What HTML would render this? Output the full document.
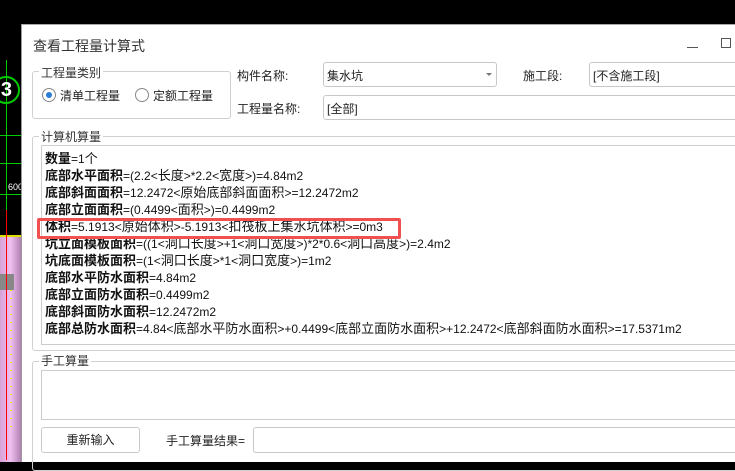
<!DOCTYPE html>
<html><head><meta charset="utf-8"><style>
*{margin:0;padding:0;box-sizing:border-box}
body{width:735px;height:462px;overflow:hidden;background:#000;position:relative;font-family:"Liberation Sans","Microsoft YaHei","Noto Sans CJK SC",sans-serif;font-size:12px;color:#222}
.a{position:absolute}
.dlg{left:21px;top:24px;width:714px;height:438px;background:#fff;border-left:1px solid #999;border-top:1px solid #aaa}
.gb{border:1px solid #d0d0d0;border-radius:3px}
.lg{background:#fff;padding:0 2px;color:#333}
.box{border:1px solid #c8c8c8;border-radius:3px;background:#fff}
.ta{border:1px solid #ccc;background:#fff}
.ln{position:absolute;left:45px;font-size:13px;line-height:17px;white-space:nowrap;color:#111}
.ln b{font-weight:bold}
.ln i{font-style:normal;font-size:12px}
</style></head><body>
<div class="a" style="left:0;top:236px;width:21px;height:226px;background:linear-gradient(90deg,#d8a0d8,#f0c0f0 50%,#b080b0)"></div>
<div class="a" style="left:0;top:235px;width:21px;height:2px;background:#dd0"></div>
<div class="a" style="left:0;top:274px;width:14px;height:16px;background:#888"></div>
<div class="a" style="left:6px;top:60px;width:1px;height:400px;background:#f00"></div>
<div class="a" style="left:6px;top:60px;width:1px;height:150px;background:#0c0"></div>
<div class="a" style="left:0;top:135px;width:21px;height:1px;background:#0c0"></div>
<div class="a" style="left:0;top:163px;width:21px;height:1px;background:#0c0"></div>
<div class="a" style="left:0;top:194px;width:21px;height:1px;background:#0c0"></div>
<div class="a" style="left:-8px;top:76px;width:28px;height:28px;border:2px solid #0c0;border-radius:50%;color:#fff;font-weight:bold;font-size:20px;line-height:24px;text-align:right;padding-right:6px">3</div>
<div class="a" style="left:8px;top:182px;color:#fff;font-size:9px">600</div>
<div class="a" style="left:10px;top:290px;width:2px;height:140px;background:repeating-linear-gradient(#ee0 0 1px,transparent 1px 8px)"></div>

<div class="a dlg"></div>
<div class="a" style="left:33px;top:36px;font-size:14px;color:#333">查看工程量计算式</div>
<div class="a" style="left:687px;top:47px;width:11px;height:1px;background:#555"></div>
<div class="a" style="left:721px;top:38px;width:10px;height:10px;border:1px solid #555"></div>

<div class="a gb" style="left:32px;top:71px;width:199px;height:48px"></div>
<div class="a lg" style="left:39px;top:64px">工程量类别</div>
<div class="a" style="left:42px;top:88px;width:14px;height:14px;border:1px solid #888;border-radius:50%;background:#fff"></div>
<div class="a" style="left:46px;top:92px;width:6px;height:6px;border-radius:50%;background:#2b7cd3"></div>
<div class="a" style="left:60px;top:87px">清单工程量</div>
<div class="a" style="left:135px;top:88px;width:14px;height:14px;border:1px solid #888;border-radius:50%"></div>
<div class="a" style="left:153px;top:87px">定额工程量</div>

<div class="a" style="left:237px;top:67px">构件名称:</div>
<div class="a box" style="left:323px;top:62px;width:174px;height:25px"></div>
<div class="a" style="left:327px;top:67px">集水坑</div>
<div class="a" style="left:486px;top:73px;border:3px solid transparent;border-top:3px solid #777"></div>
<div class="a" style="left:523px;top:67px">施工段:</div>
<div class="a box" style="left:589px;top:62px;width:150px;height:25px"></div>
<div class="a" style="left:593px;top:67px">[不含施工段]</div>
<div class="a" style="left:237px;top:100px">工程量名称:</div>
<div class="a box" style="left:323px;top:95px;width:420px;height:25px"></div>
<div class="a" style="left:327px;top:100px">[全部]</div>

<div class="a gb" style="left:32px;top:136px;width:720px;height:215px"></div>
<div class="a lg" style="left:39px;top:128px">计算机算量</div>
<div class="a ta" style="left:41px;top:145px;width:700px;height:200px"></div>
<div class="ln" style="top:150px"><b>数量</b><i>=1</i>个</div>
<div class="ln" style="top:167px"><b>底部水平面积</b><i>=(2.2&lt;</i>长度<i>&gt;*2.2&lt;</i>宽度<i>&gt;)=4.84m2</i></div>
<div class="ln" style="top:184px"><b>底部斜面面积</b><i>=12.2472&lt;</i>原始底部斜面面积<i>&gt;=12.2472m2</i></div>
<div class="ln" style="top:201px"><b>底部立面面积</b><i>=(0.4499&lt;</i>面积<i>&gt;)=0.4499m2</i></div>
<div class="ln" style="top:218px"><b>体积</b><i>=5.1913&lt;</i>原始体积<i>&gt;-5.1913&lt;</i>扣筏板上集水坑体积<i>&gt;=0m3</i></div>
<div class="ln" style="top:235px"><b>坑立面模板面积</b><i>=((1&lt;</i>洞口长度<i>&gt;+1&lt;</i>洞口宽度<i>&gt;)*2*0.6&lt;</i>洞口高度<i>&gt;)=2.4m2</i></div>
<div class="ln" style="top:252px"><b>坑底面模板面积</b><i>=(1&lt;</i>洞口长度<i>&gt;*1&lt;</i>洞口宽度<i>&gt;)=1m2</i></div>
<div class="ln" style="top:269px"><b>底部水平防水面积</b><i>=4.84m2</i></div>
<div class="ln" style="top:286px"><b>底部立面防水面积</b><i>=0.4499m2</i></div>
<div class="ln" style="top:303px"><b>底部斜面防水面积</b><i>=12.2472m2</i></div>
<div class="ln" style="top:320px"><b>底部总防水面积</b><i>=4.84&lt;</i>底部水平防水面积<i>&gt;+0.4499&lt;</i>底部立面防水面积<i>&gt;+12.2472&lt;</i>底部斜面防水面积<i>&gt;=17.5371m2</i></div>
<div class="a" style="left:37px;top:218px;width:364px;height:21px;border:3px solid #f05050;border-radius:2px"></div>

<div class="a gb" style="left:32px;top:361px;width:720px;height:110px"></div>
<div class="a lg" style="left:39px;top:352px">手工算量</div>
<div class="a ta" style="left:41px;top:370px;width:700px;height:50px"></div>
<div class="a box" style="left:41px;top:427px;width:99px;height:26px;text-align:center;line-height:24px">重新输入</div>
<div class="a" style="left:166px;top:432px">手工算量结果=</div>
<div class="a box" style="left:253px;top:427px;width:490px;height:26px"></div>
</body></html>
